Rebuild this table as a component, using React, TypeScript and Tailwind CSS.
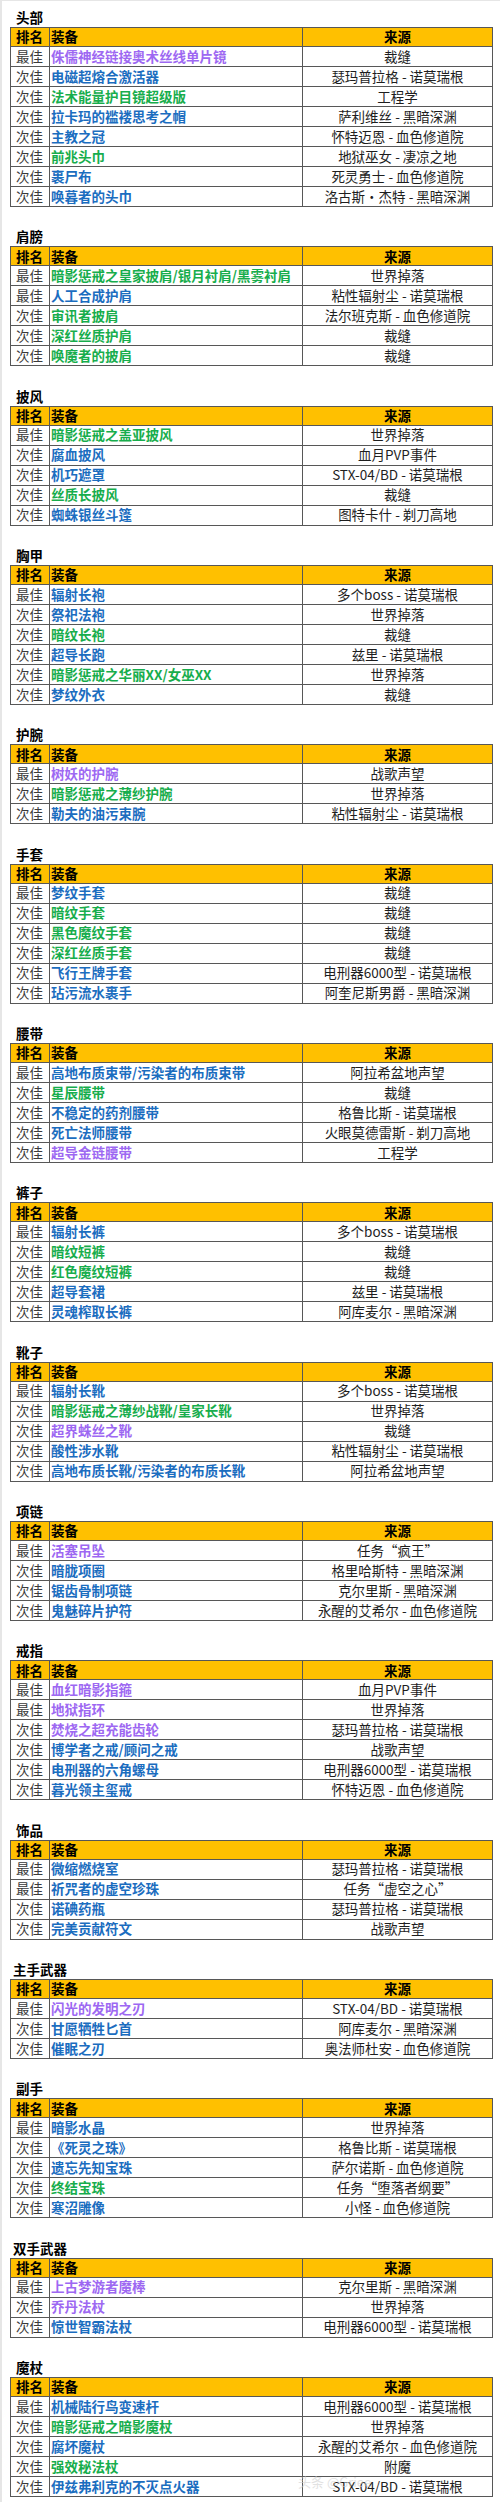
import React from "react";

type Q = "p" | "b" | "g";
type Row = [string, string, Q, string];
type Section = { title: string; rows: Row[]; tight?: boolean };

const B = "最佳";
const C = "次佳";

const sections: Section[] = [
  {
    title: "头部",
    rows: [
      [B, "侏儒神经链接奥术丝线单片镜", "p", "裁缝"],
      [C, "电磁超熔合激活器", "b", "瑟玛普拉格 - 诺莫瑞根"],
      [C, "法术能量护目镜超级版", "g", "工程学"],
      [C, "拉卡玛的褴褛思考之帽", "b", "萨利维丝 - 黑暗深渊"],
      [C, "主教之冠", "b", "怀特迈恩 - 血色修道院"],
      [C, "前兆头巾", "g", "地狱巫女 - 凄凉之地"],
      [C, "裹尸布", "b", "死灵勇士 - 血色修道院"],
      [C, "唤暮者的头巾", "b", "洛古斯·杰特 - 黑暗深渊"],
    ],
  },
  {
    title: "肩膀",
    rows: [
      [B, "暗影惩戒之皇家披肩/银月衬肩/黑雾衬肩", "g", "世界掉落"],
      [B, "人工合成护肩", "b", "粘性辐射尘 - 诺莫瑞根"],
      [C, "审讯者披肩", "g", "法尔班克斯 - 血色修道院"],
      [C, "深红丝质护肩", "g", "裁缝"],
      [C, "唤魔者的披肩", "g", "裁缝"],
    ],
  },
  {
    title: "披风",
    rows: [
      [B, "暗影惩戒之盖亚披风", "g", "世界掉落"],
      [C, "腐血披风", "b", "血月PVP事件"],
      [C, "机巧遮罩", "b", "STX-04/BD - 诺莫瑞根"],
      [C, "丝质长披风", "g", "裁缝"],
      [C, "蜘蛛银丝斗篷", "b", "图特卡什 - 剃刀高地"],
    ],
  },
  {
    title: "胸甲",
    rows: [
      [B, "辐射长袍", "b", "多个boss - 诺莫瑞根"],
      [C, "祭祀法袍", "b", "世界掉落"],
      [C, "暗纹长袍", "g", "裁缝"],
      [C, "超导长跑", "b", "兹里 - 诺莫瑞根"],
      [C, "暗影惩戒之华丽XX/女巫XX", "g", "世界掉落"],
      [C, "梦纹外衣", "b", "裁缝"],
    ],
  },
  {
    title: "护腕",
    rows: [
      [B, "树妖的护腕", "p", "战歌声望"],
      [C, "暗影惩戒之薄纱护腕", "g", "世界掉落"],
      [C, "勒夫的油污束腕", "b", "粘性辐射尘 - 诺莫瑞根"],
    ],
  },
  {
    title: "手套",
    rows: [
      [B, "梦纹手套", "b", "裁缝"],
      [C, "暗纹手套", "g", "裁缝"],
      [C, "黑色魔纹手套", "g", "裁缝"],
      [C, "深红丝质手套", "g", "裁缝"],
      [C, "飞行王牌手套", "b", "电刑器6000型 - 诺莫瑞根"],
      [C, "玷污流水裹手", "b", "阿奎尼斯男爵 - 黑暗深渊"],
    ],
  },
  {
    title: "腰带",
    rows: [
      [B, "高地布质束带/污染者的布质束带", "b", "阿拉希盆地声望"],
      [C, "星辰腰带", "g", "裁缝"],
      [C, "不稳定的药剂腰带", "b", "格鲁比斯 - 诺莫瑞根"],
      [C, "死亡法师腰带", "b", "火眼莫德雷斯 - 剃刀高地"],
      [C, "超导金链腰带", "p", "工程学"],
    ],
  },
  {
    title: "裤子",
    rows: [
      [B, "辐射长裤", "b", "多个boss - 诺莫瑞根"],
      [C, "暗纹短裤", "g", "裁缝"],
      [C, "红色魔纹短裤", "g", "裁缝"],
      [C, "超导套裙", "b", "兹里 - 诺莫瑞根"],
      [C, "灵魂榨取长裤", "b", "阿库麦尔 - 黑暗深渊"],
    ],
  },
  {
    title: "靴子",
    rows: [
      [B, "辐射长靴", "b", "多个boss - 诺莫瑞根"],
      [C, "暗影惩戒之薄纱战靴/皇家长靴", "g", "世界掉落"],
      [C, "超界蛛丝之靴", "p", "裁缝"],
      [C, "酸性涉水靴", "b", "粘性辐射尘 - 诺莫瑞根"],
      [C, "高地布质长靴/污染者的布质长靴", "b", "阿拉希盆地声望"],
    ],
  },
  {
    title: "项链",
    rows: [
      [B, "活塞吊坠", "p", "任务“疯王”"],
      [C, "暗胧项圈", "b", "格里哈斯特 - 黑暗深渊"],
      [C, "锯齿骨制项链", "b", "克尔里斯 - 黑暗深渊"],
      [C, "鬼魅碎片护符", "b", "永醒的艾希尔 - 血色修道院"],
    ],
  },
  {
    title: "戒指",
    rows: [
      [B, "血红暗影指箍", "p", "血月PVP事件"],
      [B, "地狱指环", "p", "世界掉落"],
      [C, "焚烧之超充能齿轮", "p", "瑟玛普拉格 - 诺莫瑞根"],
      [C, "博学者之戒/顾问之戒", "b", "战歌声望"],
      [C, "电刑器的六角螺母", "b", "电刑器6000型 - 诺莫瑞根"],
      [C, "暮光领主玺戒", "b", "怀特迈恩 - 血色修道院"],
    ],
  },
  {
    title: "饰品",
    rows: [
      [B, "微缩燃烧室", "b", "瑟玛普拉格 - 诺莫瑞根"],
      [B, "祈咒者的虚空珍珠", "b", "任务“虚空之心”"],
      [C, "诺碘药瓶", "b", "瑟玛普拉格 - 诺莫瑞根"],
      [C, "完美贡献符文", "b", "战歌声望"],
    ],
  },
  {
    title: "主手武器",
    tight: true,
    rows: [
      [B, "闪光的发明之刃", "p", "STX-04/BD - 诺莫瑞根"],
      [C, "甘愿牺牲匕首", "b", "阿库麦尔 - 黑暗深渊"],
      [C, "催眠之刃", "b", "奥法师杜安 - 血色修道院"],
    ],
  },
  {
    title: "副手",
    rows: [
      [B, "暗影水晶", "b", "世界掉落"],
      [C, "《死灵之珠》", "b", "格鲁比斯 - 诺莫瑞根"],
      [C, "遗忘先知宝珠", "b", "萨尔诺斯 - 血色修道院"],
      [C, "终结宝珠", "g", "任务“堕落者纲要”"],
      [C, "寒沼雕像", "b", "小怪 - 血色修道院"],
    ],
  },
  {
    title: "双手武器",
    tight: true,
    rows: [
      [B, "上古梦游者魔棒", "p", "克尔里斯 - 黑暗深渊"],
      [C, "乔丹法杖", "p", "世界掉落"],
      [C, "惊世智霸法杖", "b", "电刑器6000型 - 诺莫瑞根"],
    ],
  },
  {
    title: "魔杖",
    rows: [
      [B, "机械陆行鸟变速杆", "b", "电刑器6000型 - 诺莫瑞根"],
      [C, "暗影惩戒之暗影魔杖", "g", "世界掉落"],
      [C, "腐坏魔杖", "b", "永醒的艾希尔 - 血色修道院"],
      [C, "强效秘法杖", "g", "附魔"],
      [C, "伊兹弗利克的不灭点火器", "b", "STX-04/BD - 诺莫瑞根"],
    ],
  },
];

const qClass: Record<Q, string> = {
  p: "text-[#9d68f2]",
  b: "text-[#1b6dbf]",
  g: "text-[#17ad4c]",
};

function Table({ s }: { s: Section }) {
  return (
    <div className="w-[483px] ml-[8px] border-l border-t border-[#575757] grid grid-cols-[39px_253px_190px]">
      <div className="h-[19px] bg-[#ffc000] border-r border-b border-[#575757] pl-[5px] flex items-center font-bold text-black">
        排名
      </div>
      <div className="h-[19px] bg-[#ffc000] border-r border-b border-[#575757] pl-[1px] flex items-center font-bold text-black">
        装备
      </div>
      <div className="h-[19px] bg-[#ffc000] border-r border-b border-[#575757] flex items-center justify-center font-bold text-black">
        来源
      </div>
      {s.rows.map((r, i) => (
        <React.Fragment key={i}>
          <div className="h-[20px] border-r border-b border-[#575757] pl-[5px] flex items-center text-[#3a3a3a] whitespace-nowrap">
            {r[0]}
          </div>
          <div
            className={
              "h-[20px] border-r border-b border-[#575757] pl-[1px] flex items-center font-bold whitespace-nowrap " +
              qClass[r[2]]
            }
          >
            {r[1]}
          </div>
          <div className="h-[20px] border-r border-b border-[#575757] flex items-center justify-center text-[#1e1e1e] whitespace-nowrap">
            {r[3]}
          </div>
        </React.Fragment>
      ))}
    </div>
  );
}

export default function App() {
  return (
    <div
      className="relative w-[500px] h-[2502px] overflow-hidden bg-white border-l-[2px] border-t border-[#e6e6e6] pt-[10px] text-[13.5px] leading-none"
      style={{ fontFamily: '"Noto Sans CJK SC", "Noto Sans", sans-serif' }}
    >
      <div className="flex flex-col gap-[23.33px]">
        {sections.map((s) => (
          <section key={s.title} className="flex flex-col">
            <div
              className={
                "h-[16px] leading-[13px] font-bold text-black " +
                (s.tight ? "pl-[11px]" : "pl-[14px]")
              }
            >
              {s.title}
            </div>
            <Table s={s} />
          </section>
        ))}
      </div>
      <div className="absolute left-[296px] top-[2474px] text-[13px] text-[#cfcfcf] opacity-60 whitespace-nowrap select-none">
        头条 @Griee
      </div>
    </div>
  );
}
